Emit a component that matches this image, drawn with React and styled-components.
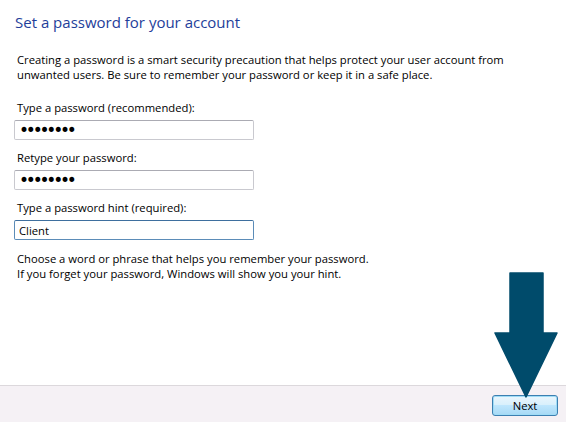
import React, { useState } from 'react';
import styled, { createGlobalStyle } from 'styled-components';

const GlobalStyle = createGlobalStyle`
    html, body {
        margin: 0;
        padding: 0;
        background: #ffffff;
    }
    body {
        font-family: "Segoe UI", "Open Sans", "Liberation Sans", sans-serif;
    }
`;

const Window = styled.div`
    position: relative;
    display: flex;
    flex-direction: column;
    width: 566px;
    height: 422px;
    overflow: hidden;
    background: #ffffff;
`;

const Content = styled.div`
    flex: 1;
    display: flex;
    flex-direction: column;
    padding: 12px 0 0 15px;
`;

const Title = styled.h1`
    margin: 0;
    font-size: 15px;
    font-weight: 400;
    line-height: 20px;
    color: #1e3e9a;
`;

const Text = styled.p`
    margin: ${(p) => p.$top || 0}px 0 0 2px;
    font-size: 11.25px;
    line-height: 15px;
    color: #000000;
`;

const Field = styled.div`
    display: flex;
    flex-direction: column;
    margin-top: ${(p) => p.$top}px;
`;

const Label = styled.label`
    margin-left: 2px;
    font-size: 11.25px;
    line-height: 15px;
    color: #000000;
`;

const Input = styled.input`
    box-sizing: border-box;
    width: 240px;
    height: 20px;
    margin: 5px 0 0 -1px;
    padding: 0 4px;
    border: 1px solid ${(p) => (p.$focused ? '#5b8cb8' : '#c9c9cf')};
    border-top-color: ${(p) => (p.$focused ? '#3e6f9e' : '#ababb3')};
    border-radius: 2px;
    font-family: ${(p) => (p.type === 'password' ? '"DejaVu Sans", sans-serif' : 'inherit')};
    font-size: ${(p) => (p.type === 'password' ? '17px' : '11.25px')};
    letter-spacing: ${(p) => (p.type === 'password' ? '-3.2px' : '0')};
    color: #000000;
    outline: none;
`;

const Footer = styled.div`
    display: flex;
    justify-content: flex-end;
    align-items: flex-start;
    height: 37px;
    padding: 9px 8px 0 0;
    box-sizing: border-box;
    border-top: 1px solid #dcd8dc;
    background: #f5f1f5;
`;

const NextButton = styled.button`
    box-sizing: border-box;
    width: 66px;
    height: 21px;
    padding: 0;
    border: 1px solid #3c7fb1;
    border-radius: 3px;
    background: linear-gradient(#eaf6fd 0%, #d9f0fc 45%, #bee6fd 50%, #a7d9f5 100%);
    box-shadow: inset 0 0 0 1px #9fdcf6;
    font-family: inherit;
    font-size: 11.25px;
    color: #000000;
`;

const ArrowMark = styled.svg`
    position: absolute;
    left: 494px;
    top: 272px;
`;

const App = () => {
    const [hint, setHint] = useState('Client');

    return (
        <Window>
            <GlobalStyle />
            <Content>
                <Title>Set a password for your account</Title>
                <Text $top={20}>
                    Creating a password is a smart security precaution that helps protect your user account from
                    <br />
                    unwanted users. Be sure to remember your password or keep it in a safe place.
                </Text>
                <Field $top={18}>
                    <Label>Type a password (recommended):</Label>
                    <Input type="password" defaultValue="12345678" />
                </Field>
                <Field $top={10}>
                    <Label>Retype your password:</Label>
                    <Input type="password" defaultValue="12345678" />
                </Field>
                <Field $top={10}>
                    <Label>Type a password hint (required):</Label>
                    <Input type="text" $focused value={hint} onChange={(e) => setHint(e.target.value)} />
                </Field>
                <Text $top={11}>
                    Choose a word or phrase that helps you remember your password.
                    <br />
                    If you forget your password, Windows will show you your hint.
                </Text>
            </Content>
            <Footer>
                <NextButton type="button">Next</NextButton>
            </Footer>
            <ArrowMark width="64" height="126" viewBox="0 0 64 126">
                <path d="M16 1 H49 V61 H63 L32 125 L1 61 H16 Z" fill="#004b6b" stroke="#004b6b" strokeWidth="1.5" strokeLinejoin="round" />
            </ArrowMark>
        </Window>
    );
};

export default App;
